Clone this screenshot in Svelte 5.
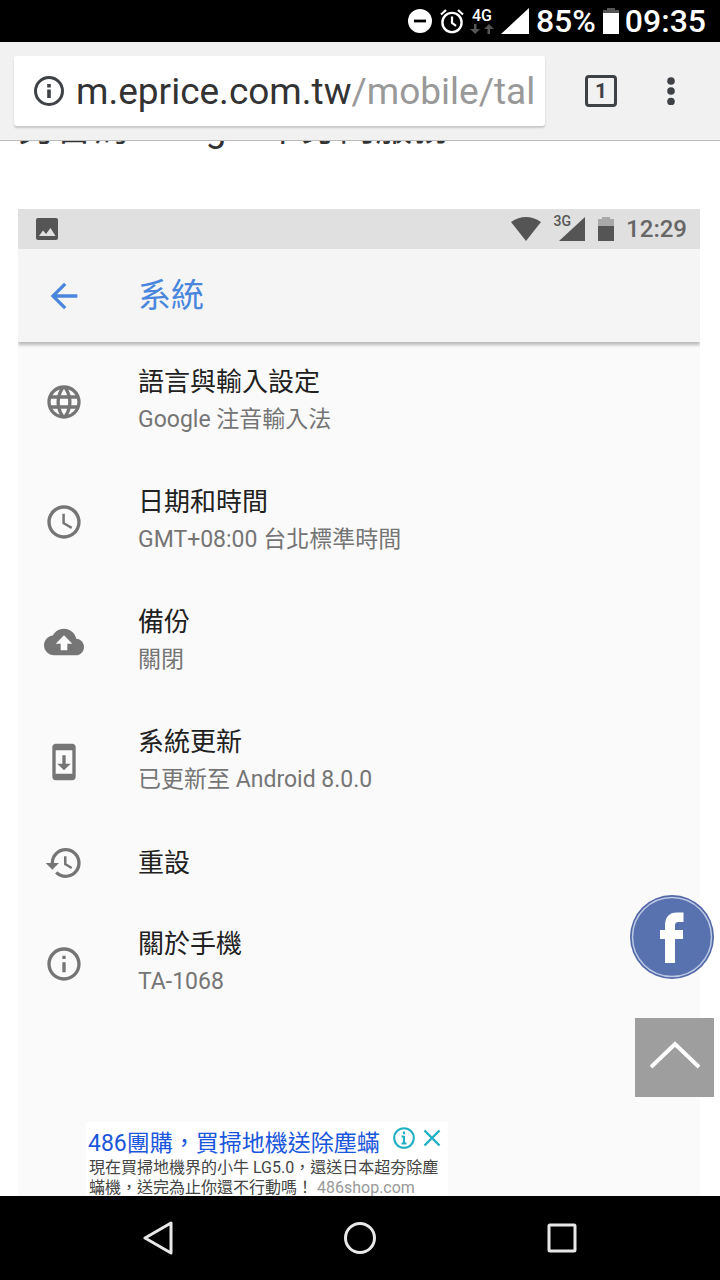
<script lang="ts">
	type Item = { icon: string; title: string; note?: string };

	const items: Item[] = [
		{ icon: 'globe', title: '語言與輸入設定', note: 'Google 注音輸入法' },
		{ icon: 'clock', title: '日期和時間', note: 'GMT+08:00 台北標準時間' },
		{ icon: 'backup', title: '備份', note: '關閉' },
		{ icon: 'update', title: '系統更新', note: '已更新至 Android 8.0.0' },
		{ icon: 'history', title: '重設' },
		{ icon: 'info', title: '關於手機', note: 'TA-1068' }
	];

	const icons: Record<string, string> = {
		globe:
			'M11.99 2C6.47 2 2 6.48 2 12s4.47 10 9.99 10C17.52 22 22 17.52 22 12S17.52 2 11.99 2zm6.93 6h-2.95c-.32-1.25-.78-2.45-1.38-3.56 1.84.63 3.37 1.91 4.33 3.56zM12 4.04c.83 1.2 1.48 2.53 1.91 3.96h-3.82c.43-1.43 1.08-2.76 1.91-3.96zM4.26 14C4.1 13.36 4 12.69 4 12s.1-1.36.26-2h3.38c-.08.66-.14 1.32-.14 2s.06 1.34.14 2H4.26zm.82 2h2.95c.32 1.25.78 2.45 1.38 3.56-1.84-.63-3.37-1.9-4.33-3.56zm2.95-8H5.08c.96-1.66 2.49-2.93 4.33-3.56C8.81 5.55 8.35 6.75 8.03 8zM12 19.96c-.83-1.2-1.48-2.53-1.91-3.96h3.82c-.43 1.43-1.08 2.76-1.91 3.96zM14.34 14H9.66c-.09-.66-.16-1.32-.16-2s.07-1.35.16-2h4.68c.09.65.16 1.32.16 2s-.07 1.34-.16 2zm.25 5.56c.6-1.11 1.06-2.31 1.38-3.56h2.95c-.96 1.65-2.49 2.93-4.33 3.56zM16.36 14c.08-.66.14-1.32.14-2s-.06-1.34-.14-2h3.38c.16.64.26 1.31.26 2s-.1 1.36-.26 2h-3.38z',
		clock:
			'M11.99 2C6.47 2 2 6.48 2 12s4.47 10 9.99 10C17.52 22 22 17.52 22 12S17.52 2 11.99 2zM12 20c-4.42 0-8-3.58-8-8s3.58-8 8-8 8 3.58 8 8-3.58 8-8 8zM12.5 7H11v6l5.25 3.15.75-1.23-4.5-2.67z',
		backup:
			'M19.35 10.04C18.67 6.59 15.64 4 12 4 9.11 4 6.6 5.64 5.35 8.04 2.34 8.36 0 10.91 0 14c0 3.31 2.69 6 6 6h13c2.76 0 5-2.24 5-5 0-2.64-2.05-4.78-4.65-4.96zM14 13v4h-4v-4H7l5-5 5 5h-3z',
		update:
			'M17 1.01L7 1c-1.1 0-2 .9-2 2v18c0 1.1.9 2 2 2h10c1.1 0 2-.9 2-2V3c0-1.1-.9-1.99-2-1.99zM17 19H7V5h10v14zm-1-6h-3V8h-2v5H8l4 4 4-4z',
		history:
			'M13 3a9 9 0 0 0-9 9H1l3.89 3.89.07.14L9 12H6c0-3.87 3.13-7 7-7s7 3.13 7 7-3.13 7-7 7c-1.93 0-3.68-.79-4.94-2.06l-1.42 1.42A8.95 8.95 0 0 0 13 21a9 9 0 0 0 0-18zm-1 5v5l4.28 2.54.72-1.21-3.5-2.08V8H12z',
		info: 'M11 17h2v-6h-2v6zm1-15C6.48 2 2 6.48 2 12s4.48 10 10 10 10-4.48 10-10S17.52 2 12 2zm0 18c-4.41 0-8-3.59-8-8s3.59-8 8-8 8 3.59 8 8-3.59 8-8 8zM11 9h2V7h-2v2z'
	};

	let path = $state('/mobile/tal');
</script>

<div class="screen">
	<div class="statusbar">
		<svg width="24" height="24" viewBox="0 0 26 26">
			<circle cx="13" cy="13" r="13" fill="#fff" />
			<path d="M6.500 13h13" stroke="#000" stroke-width="3" />
		</svg>
		<svg class="alarm" width="26" height="26" viewBox="0 0 26 26" fill="none" stroke="#fff">
			<circle cx="13" cy="14.500" r="9.600" stroke-width="2.400" />
			<path d="M13 8.500v6.500l4 2.800M2 6.500l5-4.500M24 6.500l-5-4.500" stroke-width="2.200" />
		</svg>
		<div class="network">
			<span>4G</span>
			<svg width="24" height="10" viewBox="0 0 24 10" fill="#555">
				<path d="M4 0h2.500v5h3.500l-4.800 5L0 5h4zM17.500 10h2.500V5h4L19 0l-5 5h3.500z" />
			</svg>
		</div>
		<svg width="28" height="26" viewBox="0 0 28 26"><path d="M28 0v26H0z" fill="#fff" /></svg>
		<span class="percent">85%</span>
		<svg width="16" height="26" viewBox="0 0 16 26">
			<path d="M4 0h8v2h4v3H0V2h4z" fill="#555" />
			<path d="M0 5h16v21H0z" fill="#fff" />
		</svg>
		<span class="time">09:35</span>
	</div>

	<header class="toolbar">
		<label class="address">
			<svg width="32" height="32" viewBox="0 0 32 32" fill="none" stroke="#3e4246" stroke-width="3">
				<circle cx="16" cy="16" r="13.500" />
				<path d="M16 14.500v8.500M16 9v3.500" stroke-width="3.600" />
			</svg>
			<span class="host">m.eprice.com.tw</span>
			<input type="text" aria-label="網址" bind:value={path} />
		</label>
		<button type="button" class="tabs" aria-label="分頁">1</button>
		<button type="button" class="more" aria-label="選單">
			<svg width="8" height="28" viewBox="0 0 8 28" fill="#3e4246">
				<circle cx="4" cy="4" r="3.800" />
				<circle cx="4" cy="14" r="3.800" />
				<circle cx="4" cy="24.500" r="3.800" />
			</svg>
		</button>
	</header>

	<main>
		<div class="article">
			<p>另皆為 Google 本身內服務</p>
			<section class="phone">
				<div class="phone-status">
					<svg class="picture" width="24" height="24" viewBox="0 0 24 24">
						<rect x="1" y="1" width="22" height="22" rx="2" fill="#555" />
						<path d="M4 19l4-5.500 3 3.500 4.500-6 5 8z" fill="#e0e0e0" />
					</svg>
					<svg width="30" height="24" viewBox="0 0 30 24">
						<path d="M0 5Q15-5 30 5L15 24z" fill="#555" />
					</svg>
					<span class="gen">3G</span>
					<svg class="bars" width="26" height="24" viewBox="0 0 26 24"><path d="M26 0v24H0z" fill="#555" /></svg>
					<svg width="16" height="24" viewBox="0 0 16 24">
						<path d="M4 0h8v2h4v8H0V2h4z" fill="#a9a9a9" />
						<path d="M0 9h16v15H0z" fill="#555" />
					</svg>
					<span class="phone-time">12:29</span>
				</div>
				<div class="phone-head">
					<button type="button" class="back" aria-label="返回">
						<svg width="40" height="40" viewBox="0 0 24 24" fill="#4a86dc">
							<path d="M20 11H7.830l5.590-5.590L12 4l-8 8 8 8 1.410-1.410L7.830 13H20v-2z" />
						</svg>
					</button>
					<h1>系統</h1>
				</div>
				<ul>
					{#each items as item (item.title)}
						<li>
							<button type="button" class="row">
								<svg width="40" height="40" viewBox="0 0 24 24" fill="#757575">
									<path d={icons[item.icon]} />
								</svg>
								<span class="text">
									<span class="title">{item.title}</span>
									{#if item.note}
										<span class="note">{item.note}</span>
									{/if}
								</span>
							</button>
						</li>
					{/each}
				</ul>
			</section>
		</div>

		<div class="floating">
			<a class="facebook" href="#facebook" aria-label="Facebook">
				<svg width="84" height="84" viewBox="0 0 84 84">
					<circle cx="42" cy="42" r="42" fill="#5269a6" />
					<circle cx="42" cy="42" r="39.500" fill="#5872b0" stroke="#bcc8e4" stroke-width="1.500" />
					<path
						d="M35 68V44h-5v-9h5v-4c0-9 4-13.500 12-13.500h6.500V27H49c-3 0-4 1-4 3.500V35h8v9h-8v24z"
						fill="#fff"
					/>
				</svg>
			</a>
			<a class="top" href="#top" aria-label="回到頂端">
				<svg width="50" height="28" viewBox="0 0 50 28" fill="none" stroke="#fff" stroke-width="4">
					<path d="M1 26L25 3l24 23" />
				</svg>
			</a>
		</div>

		<aside class="ad">
			<div class="ad-head">
				<a href="#ad">486團購，買掃地機送除塵蟎</a>
				<button type="button" aria-label="廣告資訊">
					<svg width="22" height="22" viewBox="0 0 22 22" fill="none" stroke="#1fafc4" stroke-width="2">
						<circle cx="11" cy="11" r="9.800" />
						<path d="M11 9v8M8.500 9.500H11M8.500 16.500h5M11 4.500v2.800" />
					</svg>
				</button>
				<button type="button" aria-label="關閉廣告">
					<svg width="18" height="18" viewBox="0 0 18 18" stroke="#1fafc4" stroke-width="2.400">
						<path d="M1.500 1.500l15 15M16.500 1.500l-15 15" />
					</svg>
				</button>
			</div>
			<p>現在買掃地機界的小牛 LG5.0，還送日本超夯除塵蟎機，送完為止你還不行動嗎！ <span>486shop.com</span></p>
		</aside>
	</main>

	<nav>
		<button type="button" aria-label="返回鍵">
			<svg width="34" height="34" viewBox="0 0 34 34"><path d="M30 2v30L4 17z" /></svg>
		</button>
		<button type="button" aria-label="主畫面">
			<svg width="34" height="34" viewBox="0 0 34 34"><circle cx="17" cy="17" r="14.500" /></svg>
		</button>
		<button type="button" aria-label="最近使用">
			<svg width="34" height="34" viewBox="0 0 34 34"><rect x="4" y="4" width="26" height="26" rx="1" /></svg>
		</button>
	</nav>
</div>

<style>
	:global(body) {
		margin: 0;
		background: #000;
	}
	.screen {
		display: flex;
		flex-direction: column;
		height: 100vh;
		overflow: hidden;
		font-family: Roboto, 'Noto Sans CJK TC', sans-serif;
		color: #212121;
	}
	button {
		display: flex;
		align-items: center;
		justify-content: center;
		padding: 0;
		border: 0;
		background: none;
		font: inherit;
		color: inherit;
		cursor: pointer;
	}
	svg {
		display: block;
		flex: none;
	}
	.statusbar {
		display: flex;
		align-items: center;
		justify-content: flex-end;
		height: 42px;
		padding-right: 14px;
		background: #000;
		color: #fff;
		font-size: 32px;
		font-weight: 500;
		line-height: 44px;
	}
	.alarm {
		margin-left: 7px;
	}
	.network {
		display: flex;
		flex-direction: column;
		align-items: center;
		margin: 0 7px 0 5px;
		font-size: 16px;
		line-height: 16px;
	}
	.percent {
		margin: 0 7px;
	}
	.time {
		margin-left: 6px;
	}
	.toolbar {
		display: flex;
		align-items: center;
		box-sizing: border-box;
		height: 99px;
		padding: 0 39px 0 14px;
		border-bottom: 1px solid #bdbdbd;
		background: #f1f1f1;
	}
	.address {
		display: flex;
		flex: 1;
		align-items: center;
		min-width: 0;
		height: 70px;
		padding: 0 8px 0 19px;
		border-radius: 3px;
		background: #fff;
		box-shadow: 0 2px 2px #c8c8c8;
		font-size: 37px;
	}
	.host {
		margin-left: 11px;
		color: #333;
	}
	.address input {
		flex: 1;
		min-width: 0;
		padding: 0;
		border: 0;
		outline: 0;
		background: none;
		font: inherit;
		color: #999;
	}
	.tabs {
		box-sizing: border-box;
		width: 32px;
		height: 32px;
		margin-left: 40px;
		border: 3px solid #3e4246;
		border-radius: 4px;
		font-size: 21px;
		font-weight: 700;
		color: #3e4246;
	}
	.more {
		width: 20px;
		height: 48px;
		margin-left: 44px;
	}
	main {
		position: relative;
		flex: 1;
		min-height: 0;
		overflow: hidden;
		background: #fff;
	}
	.article {
		padding: 0 20px 0 18px;
	}
	/* the page is scrolled, so only the foot of this line shows */
	.article p {
		margin: -37px 0 55px;
		font-size: 37px;
		line-height: 50px;
		white-space: nowrap;
		color: #333;
	}
	.phone {
		min-height: 1000px;
		overflow: hidden;
		background: #fafafa;
	}
	.phone-status {
		display: flex;
		align-items: center;
		height: 40px;
		padding: 0 13px 0 17px;
		background: #e0e0e0;
		color: #555;
	}
	.picture {
		margin-right: auto;
	}
	.gen {
		align-self: flex-start;
		margin-left: 13px;
		font-size: 14px;
		font-weight: 500;
		line-height: 24px;
	}
	.bars {
		margin: 0 13px 0 -12px;
	}
	.phone-time {
		margin-left: 12px;
		font-size: 24px;
		font-weight: 500;
		line-height: 42px;
		color: #666;
	}
	.phone-head {
		display: flex;
		align-items: center;
		height: 93px;
		padding-left: 26px;
		background: #f5f5f5;
		box-shadow: 0 3px 3px rgba(0, 0, 0, 0.25);
	}
	h1 {
		margin: 0 0 0 54px;
		font-size: 33px;
		font-weight: 400;
		line-height: 48px;
		color: #4a86dc;
	}
	ul {
		margin: 0;
		padding: 11px 0 0;
		list-style: none;
	}
	.row {
		justify-content: flex-start;
		width: 100%;
		padding: 10px 26px 32px;
		text-align: left;
	}
	.text {
		display: flex;
		flex-direction: column;
		margin-left: 54px;
	}
	.title {
		font-size: 26px;
		line-height: 38px;
		color: #212121;
	}
	.note {
		font-size: 23px;
		line-height: 38px;
		padding-bottom: 2px;
		color: #757575;
	}
	.floating {
		position: absolute;
		right: 6px;
		bottom: 99px;
		display: flex;
		flex-direction: column;
		align-items: flex-end;
		gap: 39px;
	}
	.top {
		display: flex;
		align-items: center;
		justify-content: center;
		box-sizing: border-box;
		width: 79px;
		height: 79px;
		padding-bottom: 5px;
		background: #9e9e9e;
	}
	.ad {
		position: absolute;
		bottom: 0;
		left: 86px;
		width: 362px;
		height: 74px;
		overflow: hidden;
		background: #fff;
	}
	.ad-head {
		display: flex;
		align-items: flex-start;
		gap: 8px;
		padding-right: 7px;
	}
	.ad-head a {
		margin-right: auto;
		padding: 8px 0 0 2px;
		font-size: 23px;
		line-height: 28px;
		white-space: nowrap;
		text-decoration: none;
		color: #1a56db;
	}
	.ad-head button {
		height: 22px;
		margin-top: 5px;
	}
	.ad p {
		margin: 0 8px 0 3px;
		font-size: 16px;
		line-height: 20px;
		color: #444;
	}
	.ad p span {
		color: #999;
	}
	nav {
		display: flex;
		align-items: center;
		justify-content: space-around;
		height: 84px;
		padding: 0 57px;
		background: #000;
	}
	nav svg {
		fill: none;
		stroke: #e8e8e8;
		stroke-width: 3;
		stroke-linejoin: round;
	}
</style>
